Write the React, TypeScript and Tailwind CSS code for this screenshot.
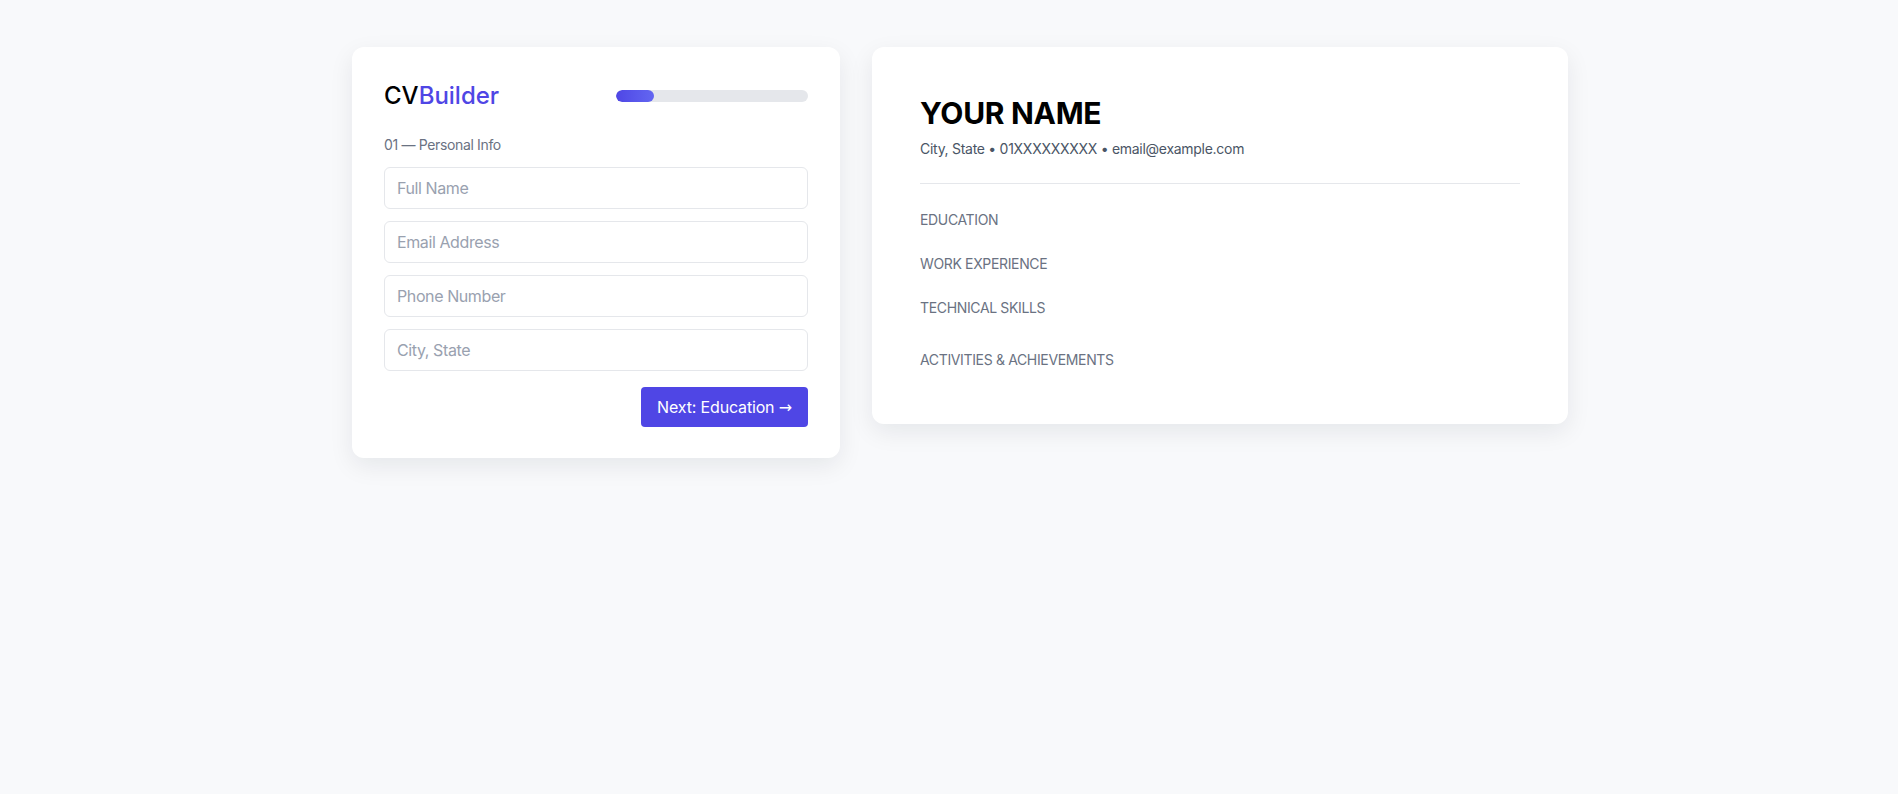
import React from "react";

const sections = [
  { title: "EDUCATION", gap: "mb-6" },
  { title: "WORK EXPERIENCE", gap: "mb-6" },
  { title: "TECHNICAL SKILLS", gap: "mb-8" },
  { title: "ACTIVITIES & ACHIEVEMENTS", gap: "" },
];

const fields = ["Full Name", "Email Address", "Phone Number", "City, State"];

export default function App() {
  const progress = 20;

  return (
    <div
      className="min-h-screen bg-[#f8f9fb] pl-[352px] pt-[47px]"
      style={{ fontFamily: "Inter, 'Noto Sans', sans-serif" }}
    >
      <div className="flex items-start gap-8">
        {/* form card */}
        <div className="w-[488px] rounded-xl bg-white p-8 pb-[31px] shadow-[0_8px_24px_rgba(15,23,42,0.08)]">
          <div className="mb-6 flex items-center justify-between">
            <h1 className="translate-y-px text-2xl font-medium text-black">
              CV<span className="text-[#4f46e5]">Builder</span>
            </h1>
            <div className="h-3 w-48 translate-y-px overflow-hidden rounded-full bg-[#e5e7eb]">
              <div
                className="h-full rounded-full bg-gradient-to-r from-[#4f46e5] to-[#6366f1]"
                style={{ width: `${progress}%` }}
              />
            </div>
          </div>

          <p className="mb-3 text-sm tracking-tight text-gray-500">01 — Personal Info</p>

          <div className="flex flex-col gap-3">
            {fields.map((f) => (
              <input
                key={f}
                placeholder={f}
                className="h-[42px] w-full rounded-md border border-gray-200 px-3 text-base tracking-tight text-gray-800 outline-none placeholder:text-gray-400"
              />
            ))}
          </div>

          <div className="mt-4 flex justify-end">
            <button className="h-10 rounded bg-[#4f46e5] px-4 text-base tracking-[-0.01em] text-white hover:bg-[#4338ca]">
              Next: Education{" "}
              <span style={{ fontFamily: "'DejaVu Sans', sans-serif" }}>→</span>
            </button>
          </div>
        </div>

        {/* preview card */}
        <div className="w-[696px] rounded-xl bg-white px-12 pt-12 pb-[54px] shadow-[0_8px_24px_rgba(15,23,42,0.08)]">
          <div className="border-b border-gray-200 pb-6">
            <h2 className="text-3xl font-bold tracking-[-0.01em] text-black">YOUR NAME</h2>
            <p className="mt-2 text-sm tracking-[-0.02em] text-gray-600">
              City, State • 01XXXXXXXXX • email@example.com
            </p>
          </div>
          <div className="pt-[26px]">
            {sections.map((s) => (
              <div key={s.title} className={s.gap}>
                <h3 className="text-sm tracking-tight text-gray-500">{s.title}</h3>
              </div>
            ))}
          </div>
        </div>
      </div>
    </div>
  );
}
